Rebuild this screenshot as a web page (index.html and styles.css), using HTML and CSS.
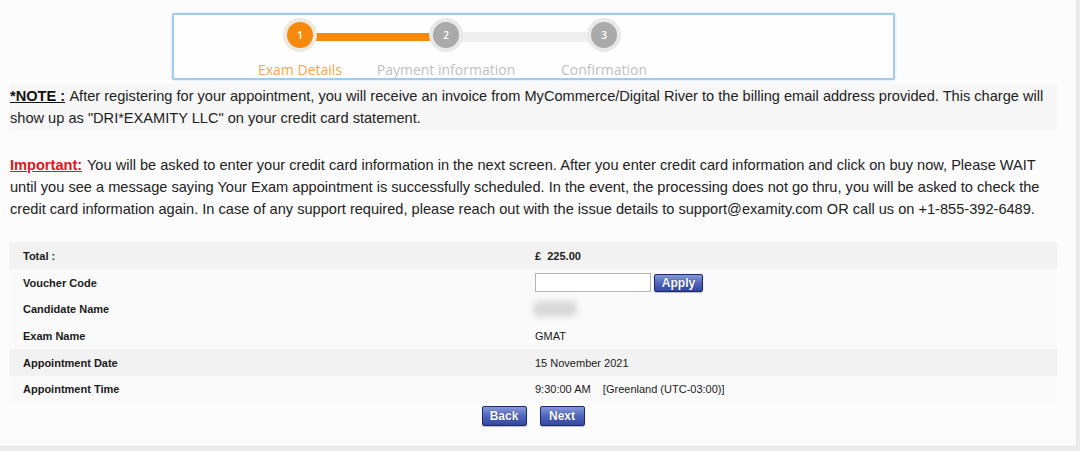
FILE: index.html
```html
<!DOCTYPE html>
<html>
<head>
<meta charset="utf-8">
<link rel="stylesheet" href="styles.css">
</head>
<body>
<div class="page">
  <div class="stepper">
    <div class="track">
      <span class="seg seg-done"></span>
      <span class="seg seg-todo"></span>
    </div>
    <div class="step step-1 active">
      <span class="ring"><span class="dot">1</span></span>
      <span class="label">Exam Details</span>
    </div>
    <div class="step step-2">
      <span class="ring"><span class="dot">2</span></span>
      <span class="label">Payment information</span>
    </div>
    <div class="step step-3">
      <span class="ring"><span class="dot">3</span></span>
      <span class="label">Confirmation</span>
    </div>
  </div>

  <p class="note"><b class="note-tag">*NOTE :</b> After registering for your appointment, you will receive an invoice from MyCommerce/Digital River to the billing email address provided. This charge will show up as "DRI*EXAMITY LLC" on your credit card statement.</p>

  <p class="important"><b class="imp-tag">Important:</b> You will be asked to enter your credit card information in the next screen. After you enter credit card information and click on buy now, Please WAIT until you see a message saying Your Exam appointment is successfully scheduled. In the event, the processing does not go thru, you will be asked to check the credit card information again. In case of any support required, please reach out with the issue details to support@examity.com OR call us on +1-855-392-6489.</p>

  <div class="details">
    <div class="row shade h27">
      <span class="key">Total :</span>
      <span class="val strong">£&nbsp; 225.00</span>
    </div>
    <div class="row h27">
      <span class="key">Voucher Code</span>
      <span class="val"><input class="voucher" type="text"><button class="btn btn-apply">Apply</button></span>
    </div>
    <div class="row h26">
      <span class="key">Candidate Name</span>
      <span class="val"><span class="blurred"></span></span>
    </div>
    <div class="row h27">
      <span class="key">Exam Name</span>
      <span class="val">GMAT</span>
    </div>
    <div class="row shade h27">
      <span class="key">Appointment Date</span>
      <span class="val">15 November 2021</span>
    </div>
    <div class="row h26">
      <span class="key">Appointment Time</span>
      <span class="val">9:30:00 AM&nbsp;&nbsp;&nbsp; [Greenland (UTC-03:00)]</span>
    </div>
  </div>

  <div class="actions">
    <button class="btn btn-nav">Back</button>
    <button class="btn btn-nav">Next</button>
  </div>
</div>
</body>
</html>
```

FILE: styles.css
```css
html, body {
  margin: 0;
  padding: 0;
}
body {
  background: #ececec;
  font-family: "Liberation Sans", Arial, sans-serif;
  color: #222;
  width: 1080px;
  height: 451px;
  overflow: hidden;
}
.page {
  width: 1077px;
  height: 447px;
  background: #fcfcfc;
  border-right: 1px solid #e4e4e4;
  border-bottom: 1px solid #e4e4e4;
  padding-top: 13px;
  box-sizing: border-box;
  display: flex;
  flex-direction: column;
}

/* Stepper */
.stepper {
  position: relative;
  margin-left: 172px;
  width: 723px;
  height: 67px;
  box-sizing: border-box;
  border: 2px solid #a3cbec;
  border-radius: 2px;
  background: #fefefe;
  display: flex;
  padding-left: 53px;
  box-shadow: 0 0 2px rgba(120,170,220,0.5);
}
.track {
  position: absolute;
  left: 126px;
  top: 17px;
  display: flex;
  align-items: center;
  height: 10px;
}
.seg {
  display: block;
  height: 8px;
}
.seg-done {
  width: 146px;
  background: #f7890c;
}
.seg-todo {
  width: 158px;
  height: 10px;
  background: #efefef;
}
.step {
  position: relative;
  display: flex;
  flex-direction: column;
  align-items: center;
}
.step-1 { width: 146px; }
.step-2 { width: 146px; }
.step-3 { width: 170px; }
.ring {
  margin-top: 3px;
  width: 34px;
  height: 34px;
  border-radius: 50%;
  background: #e9e9e9;
  display: flex;
  align-items: center;
  justify-content: center;
}
.dot {
  width: 26px;
  height: 26px;
  border-radius: 50%;
  background: #aaaaaa;
  color: #fff;
  font-family: "Open Sans", sans-serif;
  font-size: 10px;
  font-weight: 600;
  display: flex;
  align-items: center;
  justify-content: center;
}
.active .dot {
  background: #f7890c;
}
.active .ring {
  background: #ece8e2;
}
.label {
  margin-top: 10px;
  font-family: "Open Sans", sans-serif;
  font-size: 14px;
  line-height: 16px;
  color: #c0c0c0;
  white-space: nowrap;
}
.active .label {
  color: #f4a650;
}

/* Paragraphs */
.note, .important {
  margin: 0 0 0 9px;
  width: 1048px;
  padding-left: 1px;
  box-sizing: border-box;
  font-size: 14.6px;
  line-height: 22px;
}
.note {
  margin-top: 4px;
  padding-top: 1px;
  padding-bottom: 1px;
  background: #f7f7f7;
}
.note-tag {
  text-decoration: underline;
  color: #111;
  margin-right: 1px;
}
.important {
  margin-top: 24px;
}
.imp-tag {
  color: #e3141c;
  text-decoration: underline;
  margin-right: 1px;
}

/* Details table */
.details {
  margin: 22px 0 0 9px;
  width: 1048px;
  display: flex;
  flex-direction: column;
}
.row {
  display: flex;
  align-items: center;
  background: #fafafa;
  font-size: 11px;
}
.h27 { height: 27px; }
.h26 { height: 26px; }
.row.shade { background: #f2f2f2; }
.key {
  width: 526px;
  padding-left: 14px;
  box-sizing: border-box;
  font-weight: bold;
  color: #1a1a1a;
}
.val {
  display: flex;
  align-items: center;
  color: #1a1a1a;
  white-space: pre;
}
.strong { font-weight: bold; }
.voucher {
  width: 116px;
  height: 19px;
  box-sizing: border-box;
  margin: 0;
  border: 1px solid #b4b4b4;
  background: #fff;
  padding: 0 3px;
}
.btn {
  margin: 0;
  padding: 0;
  box-sizing: border-box;
  border: 1px solid #1c2a6b;
  border-radius: 2px;
  background: linear-gradient(#8599db, #5065bb 50%, #34479f);
  color: #fff;
  font-family: "Liberation Sans", Arial, sans-serif;
  font-size: 12px;
  font-weight: bold;
  text-shadow: 0 0 1px #1c2a6b;
  display: flex;
  align-items: center;
  justify-content: center;
  box-shadow: 0 1px 1px rgba(0,0,0,0.25);
}
.btn-apply {
  margin-left: 3px;
  width: 49px;
  height: 18px;
}
.blurred {
  display: block;
  margin-left: -2px;
  width: 44px;
  height: 16px;
  background: #d9d9d9;
  border-radius: 6px;
  filter: blur(3px);
}
.actions {
  margin: 4px 0 0 9px;
  width: 1048px;
  display: flex;
  justify-content: center;
  gap: 13px;
}
.btn-nav {
  width: 45px;
  height: 20px;
}
```
